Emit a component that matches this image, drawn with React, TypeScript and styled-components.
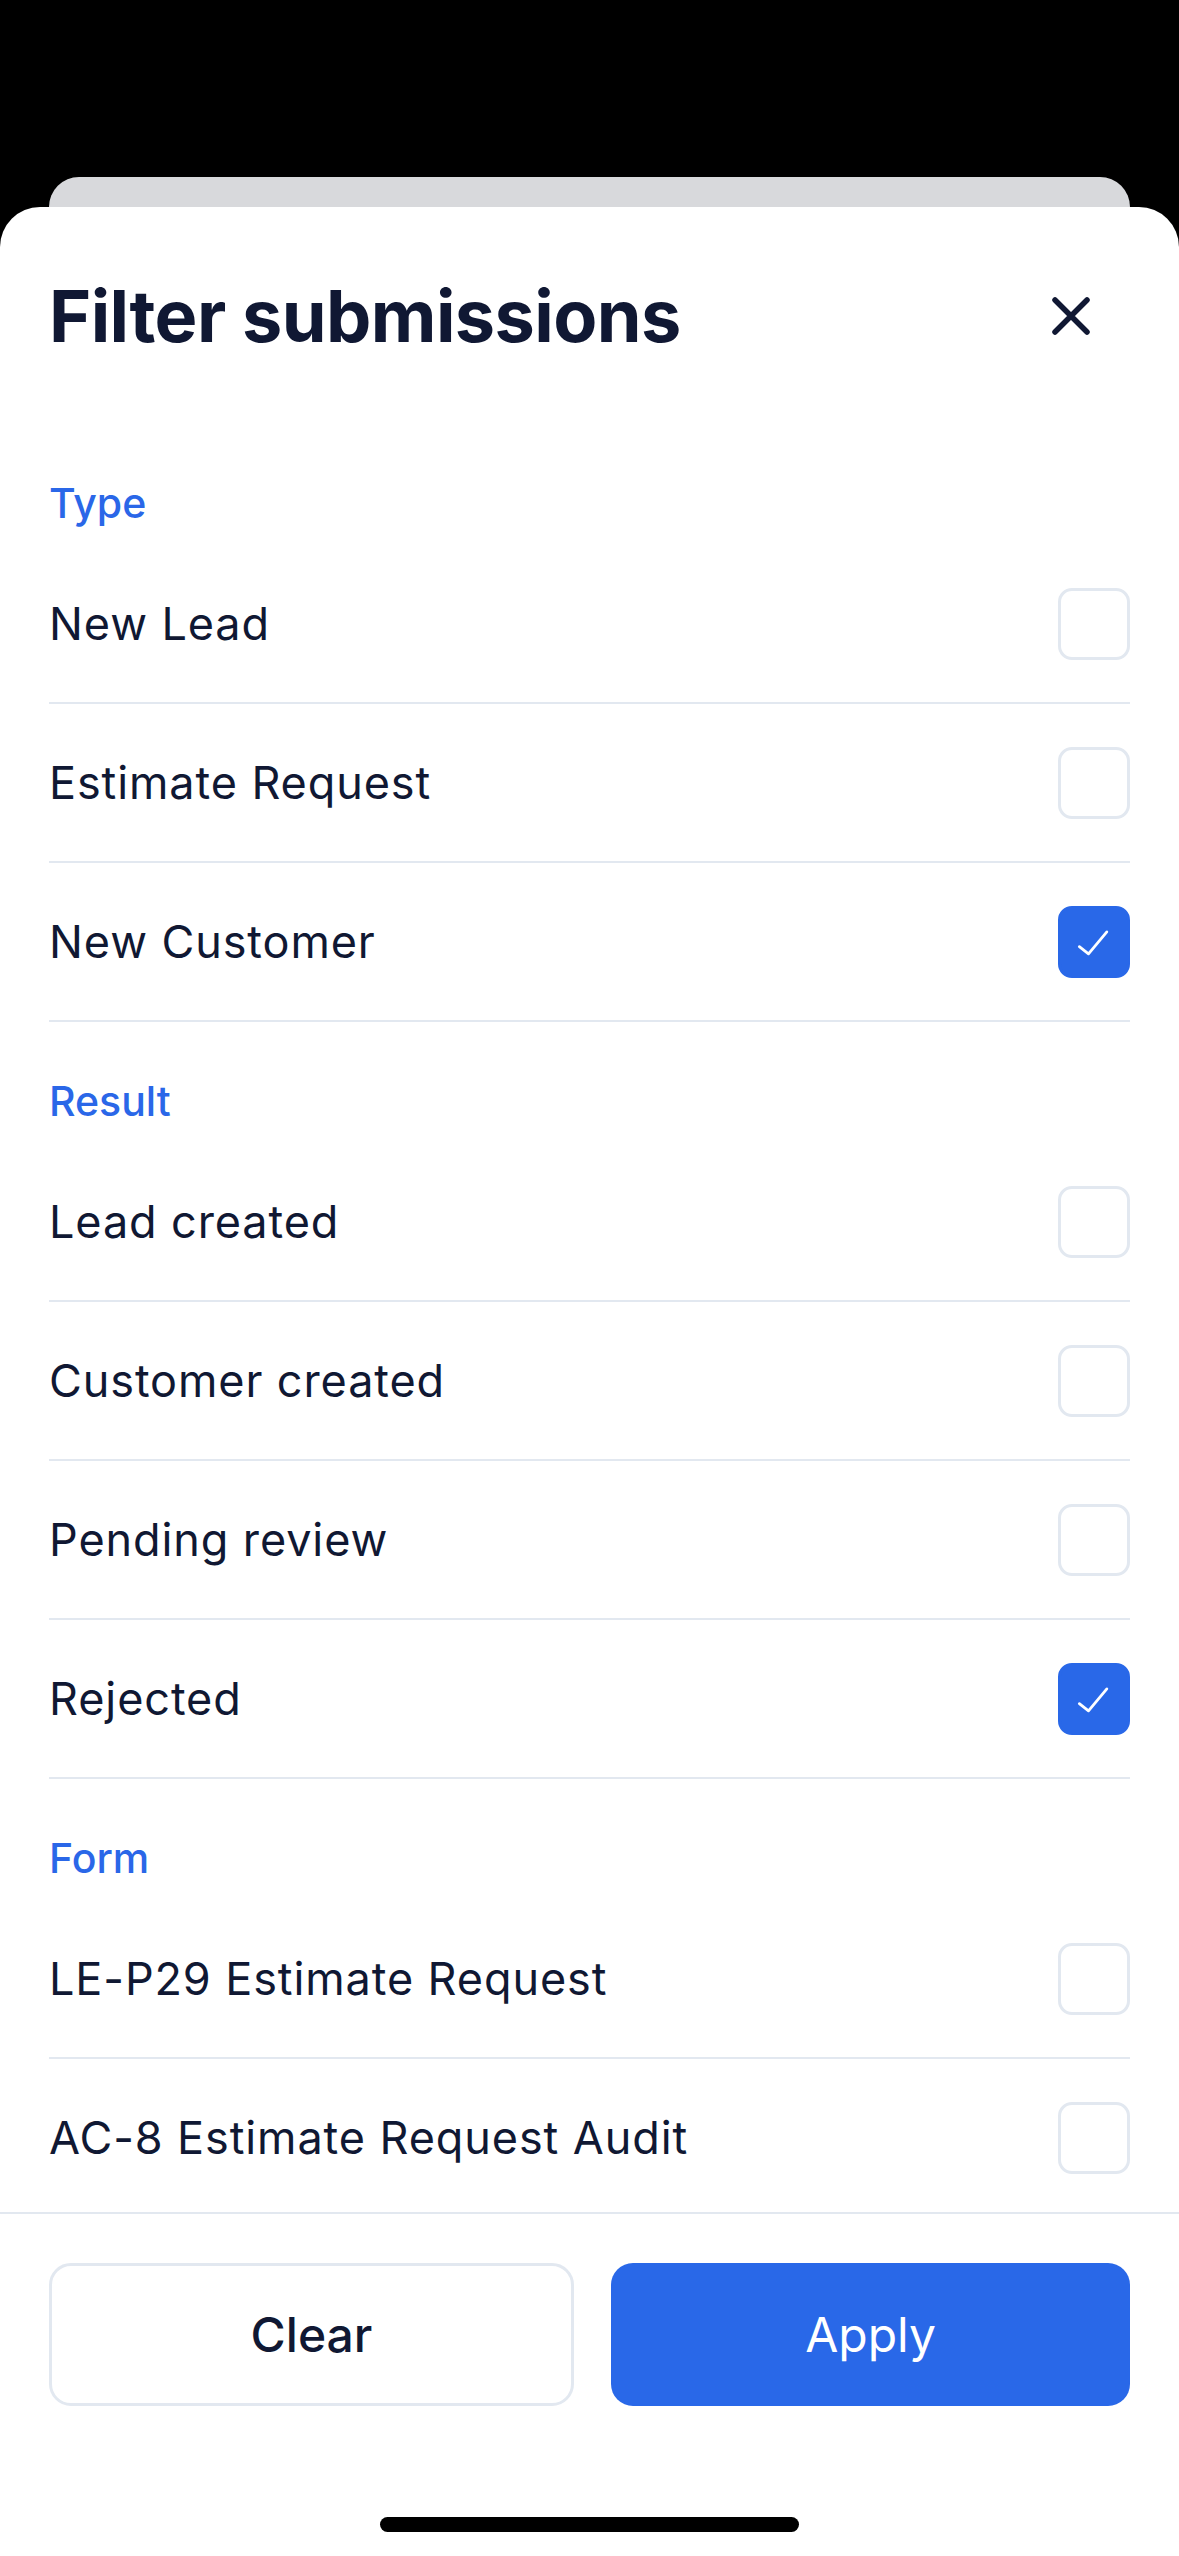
import React, { useState } from 'react';
import styled, { createGlobalStyle } from 'styled-components';

const GlobalStyle = createGlobalStyle`
  html, body {
    margin: 0;
    padding: 0;
    background: #000;
    font-family: Inter, "Noto Sans", sans-serif;
    -webkit-font-smoothing: antialiased;
  }
  #root {
    height: 100vh;
  }
  * {
    box-sizing: border-box;
  }
`;

const Screen = styled.div`
  height: 100vh;
  display: flex;
  flex-direction: column;
  padding-top: 177px;
  overflow: hidden;
`;

const BackCard = styled.div`
  flex: none;
  height: 30px;
  margin: 0 49px;
  background: #d8d9dc;
  border-radius: 30px 30px 0 0;
`;

const Sheet = styled.div`
  flex: 1;
  min-height: 0;
  display: flex;
  flex-direction: column;
  background: #fff;
  border-radius: 40px 40px 0 0;
`;

const Header = styled.div`
  display: flex;
  align-items: center;
  justify-content: space-between;
  padding: 66px 49px 0;
`;

const Title = styled.h1`
  margin: 0;
  font-size: 72px;
  line-height: 86px;
  font-weight: 700;
  color: #101833;
  letter-spacing: -0.6px;
`;

const CloseButton = styled.button`
  width: 118px;
  height: 86px;
  display: flex;
  align-items: center;
  justify-content: center;
  border: none;
  background: none;
  padding: 0;
  cursor: pointer;
`;

const List = styled.div`
  flex: 1;
  min-height: 0;
  overflow: hidden;
  padding: 119px 49px 0;
`;

const Section = styled.section`
  & + & {
    margin-top: 54px;
  }
`;

const SectionLabel = styled.div`
  font-size: 41px;
  line-height: 50px;
  font-weight: 500;
  color: #2a67e8;
  margin-bottom: 17px;
`;

const Row = styled.label`
  height: 159px;
  display: flex;
  align-items: center;
  justify-content: space-between;
  border-bottom: 2px solid #e2e8f0;
  cursor: pointer;
`;

const RowText = styled.span`
  font-size: 45px;
  font-weight: 400;
  letter-spacing: 0.9px;
  color: #101833;
`;

const Box = styled.span<{ $checked: boolean }>`
  width: 72px;
  height: 72px;
  flex: none;
  display: flex;
  align-items: center;
  justify-content: center;
  border-radius: 14px;
  border: 3px solid ${({ $checked }) => ($checked ? '#2968e8' : '#e2e8f0')};
  background: ${({ $checked }) => ($checked ? '#2968e8' : '#fff')};
`;

const Footer = styled.div`
  flex: none;
  border-top: 2px solid #e2e8f0;
  padding: 49px 49px 0;
  display: flex;
  flex-direction: column;
  align-items: center;
`;

const Buttons = styled.div`
  width: 100%;
  display: grid;
  grid-template-columns: 525px 1fr;
  gap: 37px;
`;

const ActionButton = styled.button<{ $primary?: boolean }>`
  height: 143px;
  border-radius: 22px;
  font-family: Inter, "Noto Sans", sans-serif;
  font-size: 48px;
  font-weight: ${({ $primary }) => ($primary ? 400 : 500)};
  color: ${({ $primary }) => ($primary ? '#fff' : '#101833')};
  background: ${({ $primary }) => ($primary ? '#2968e8' : '#fff')};
  border: ${({ $primary }) => ($primary ? 'none' : '3px solid #e2e8f0')};
  cursor: pointer;
`;

const HomeIndicator = styled.div`
  width: 419px;
  height: 15px;
  border-radius: 8px;
  background: #000;
  margin: 111px 0 24px;
`;

type Group = { label: string; items: string[] };

const groups: Group[] = [
  { label: 'Type', items: ['New Lead', 'Estimate Request', 'New Customer'] },
  { label: 'Result', items: ['Lead created', 'Customer created', 'Pending review', 'Rejected'] },
  { label: 'Form', items: ['LE-P29 Estimate Request', 'AC-8 Estimate Request Audit'] },
];

const CloseIcon = () => (
  <svg width="38" height="38" viewBox="0 0 38 38" fill="none">
    <path d="M3 3L35 35M35 3L3 35" stroke="#101833" strokeWidth="5.5" strokeLinecap="round" />
  </svg>
);

const CheckIcon = () => (
  <svg width="72" height="72" viewBox="0 0 72 72" fill="none">
    <path d="M20 41L30 49L50 25" stroke="#fff" strokeWidth="3" strokeLinecap="round" strokeLinejoin="round" />
  </svg>
);

const App: React.FC = () => {
  const [selected, setSelected] = useState<Record<string, boolean>>({
    'New Customer': true,
    Rejected: true,
  });

  const toggle = (key: string) => setSelected(prev => ({ ...prev, [key]: !prev[key] }));

  return (
    <>
      <GlobalStyle />
      <Screen>
        <BackCard />
        <Sheet>
          <Header>
            <Title>Filter submissions</Title>
            <CloseButton aria-label="Close">
              <CloseIcon />
            </CloseButton>
          </Header>
          <List>
            {groups.map(group => (
              <Section key={group.label}>
                <SectionLabel>{group.label}</SectionLabel>
                {group.items.map(item => (
                  <Row key={item} onClick={() => toggle(item)}>
                    <RowText>{item}</RowText>
                    <Box $checked={!!selected[item]}>{selected[item] && <CheckIcon />}</Box>
                  </Row>
                ))}
              </Section>
            ))}
          </List>
          <Footer>
            <Buttons>
              <ActionButton onClick={() => setSelected({})}>Clear</ActionButton>
              <ActionButton $primary>Apply</ActionButton>
            </Buttons>
            <HomeIndicator />
          </Footer>
        </Sheet>
      </Screen>
    </>
  );
};

export default App;
